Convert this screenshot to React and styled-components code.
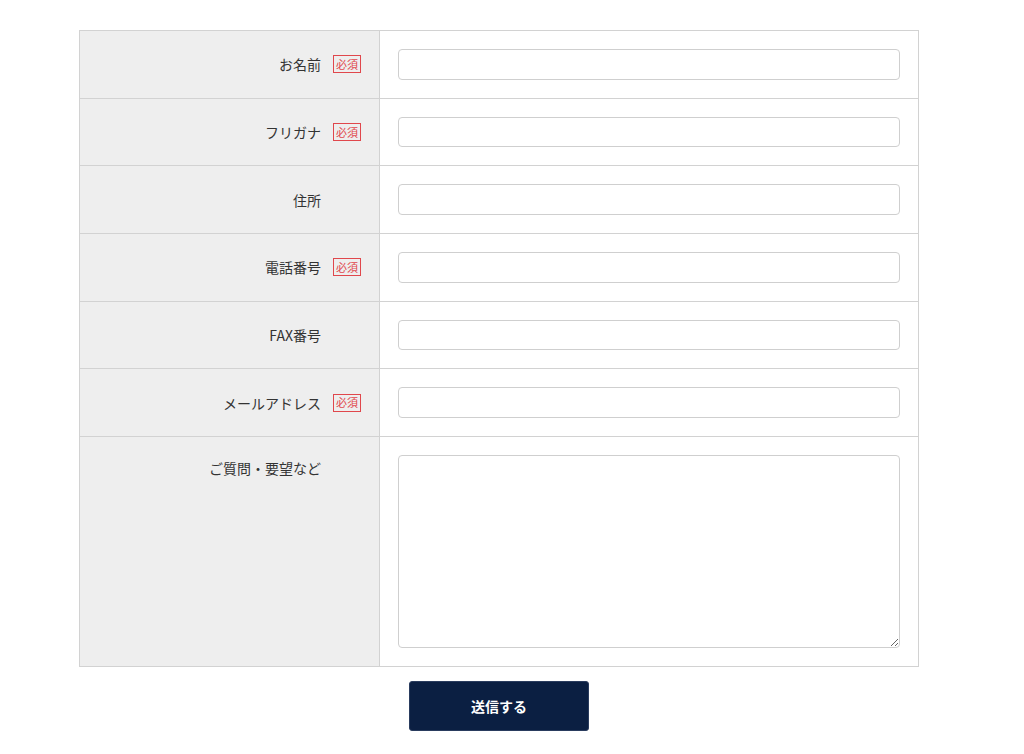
import React from 'react';
import styled, { createGlobalStyle } from 'styled-components';

const GlobalStyle = createGlobalStyle`
  body {
    margin: 0;
    background: #fff;
    font-family: "Noto Sans CJK JP", "Noto Sans", sans-serif;
    color: #333;
  }
`;

const Page = styled.div`
  width: 840px;
  padding: 30px 0 0 79px;
`;

const Form = styled.form`
  display: flex;
  flex-direction: column;
  align-items: center;
`;

const Table = styled.div`
  width: 100%;
  border: 1px solid #d2d2d2;
  box-sizing: border-box;
`;

const Row = styled.div`
  display: grid;
  grid-template-columns: 300px 1fr;
  border-top: ${p => (p.first ? 'none' : '1px solid #d2d2d2')};
`;

const Label = styled.div`
  background: #eeeeee;
  border-right: 1px solid #d2d2d2;
  display: flex;
  justify-content: flex-end;
  align-items: ${p => (p.top ? 'flex-start' : 'center')};
  padding: ${p => (p.top ? '21px 18px 0 0' : '0 18px 0 0')};
  gap: 12px;
  font-size: 14px;
  line-height: 20px;
  color: #333;
`;

const Badge = styled.span`
  display: inline-flex;
  align-items: center;
  justify-content: center;
  width: 28px;
  height: 18px;
  box-sizing: border-box;
  border: 1px solid #e0474c;
  color: #e0474c;
  font-size: 11px;
  line-height: 1;
  visibility: ${p => (p.hidden ? 'hidden' : 'visible')};
`;

const Cell = styled.div`
  padding: 18px;
  display: flex;
`;

const Input = styled.input`
  width: 100%;
  height: 30.7px;
  box-sizing: border-box;
  border: 1px solid #cfcfcf;
  border-radius: 4px;
  background: #fff;
  font-size: 14px;
  padding: 0 8px;
`;

const TextArea = styled.textarea`
  width: 100%;
  height: 193px;
  box-sizing: border-box;
  border: 1px solid #cfcfcf;
  border-radius: 4px;
  font-size: 14px;
  padding: 8px;
  font-family: inherit;
`;

const Submit = styled.button`
  margin-top: 14px;
  width: 180px;
  height: 50px;
  background: #0b1f42;
  color: #fff;
  border: 1px solid #2a3c5e;
  border-radius: 3px;
  font-family: "Noto Sans CJK JP", sans-serif;
  font-size: 14px;
  font-weight: bold;
  cursor: pointer;
`;

const fields = [
  { label: 'お名前', required: true },
  { label: 'フリガナ', required: true },
  { label: '住所', required: false },
  { label: '電話番号', required: true },
  { label: 'FAX番号', required: false },
  { label: 'メールアドレス', required: true },
];

export default function App() {
  return (
    <>
      <GlobalStyle />
      <Page>
        <Form onSubmit={e => e.preventDefault()}>
          <Table>
            {fields.map((f, i) => (
              <Row key={f.label} first={i === 0}>
                <Label>
                  <span>{f.label}</span>
                  <Badge hidden={!f.required}>必須</Badge>
                </Label>
                <Cell>
                  <Input type="text" />
                </Cell>
              </Row>
            ))}
            <Row>
              <Label top>
                <span>ご質問・要望など</span>
                <Badge hidden>必須</Badge>
              </Label>
              <Cell>
                <TextArea />
              </Cell>
            </Row>
          </Table>
          <Submit type="submit">送信する</Submit>
        </Form>
      </Page>
    </>
  );
}
